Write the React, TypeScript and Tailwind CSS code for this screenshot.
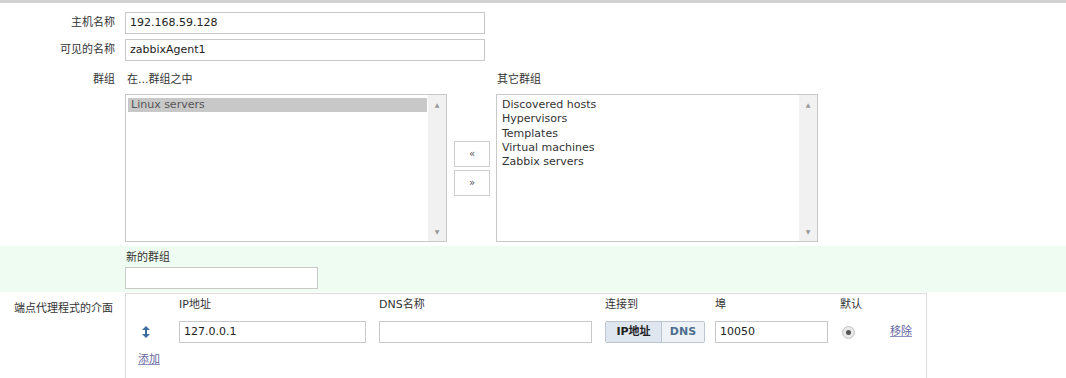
import { ReactNode } from "react";

const font = { fontFamily: '"DejaVu Sans", "Noto Sans CJK SC", sans-serif' };

const inGroup = ["Linux servers"];
const otherGroups = [
  "Discovered hosts",
  "Hypervisors",
  "Templates",
  "Virtual machines",
  "Zabbix servers",
];

const Row = ({ label, children }: { label: string; children: ReactNode }) => (
  <div className="flex items-start">
    <div className="w-[125px] shrink-0 pr-[10px] text-right text-[#333] leading-[22px]">{label}</div>
    <div>{children}</div>
  </div>
);

const TextInput = ({ value, w }: { value?: string; w: string }) => (
  <div
    className={`${w} h-[22px] border border-[#c9c9c9] bg-white px-[4px] text-[11px] leading-[20px] text-[#222]`}
  >
    {value}
  </div>
);

const ListBox = ({ items, selected }: { items: string[]; selected?: string }) => (
  <div className="flex h-[148px] w-[322px] border border-[#c9c9c9] bg-white">
    <div className="flex-1 pl-[2px] pr-[1px] pt-[3px]">
      {items.map((it) => (
        <div
          key={it}
          className={`h-[14.3px] pl-[3px] leading-[14px] ${
            it === selected ? "bg-[#c8c8c8] text-[#555]" : "text-[#333]"
          }`}
        >
          {it}
        </div>
      ))}
    </div>
    <div className="flex w-[18px] flex-col items-center justify-between bg-[#f1f1f1] py-[5px] text-[6px] text-[#999]">
      <span>▲</span>
      <span>▼</span>
    </div>
  </div>
);

const MoveButton = ({ children }: { children: ReactNode }) => (
  <div className="flex h-[26px] w-[36px] items-center justify-center border border-[#cfcfcf] bg-white text-[10px] text-[#555]">
    {children}
  </div>
);

const DragIcon = () => (
  <svg width="8" height="12" viewBox="0 0 8 12">
    <path d="M4 0 L8 4 H0 Z M4 12 L8 8 H0 Z" fill="#3f6d9a" />
    <rect x="3" y="3" width="2" height="6" fill="#3f6d9a" />
  </svg>
);

export default function App() {
  return (
    <div className="min-h-[378px] w-[1066px] overflow-hidden border-t-[3px] border-[#d2d2d2] bg-white text-[11px]" style={font}>
      <div className="flex flex-col gap-[5px] pt-[9px]">
        <Row label="主机名称">
          <TextInput value="192.168.59.128" w="w-[360px]" />
        </Row>
        <Row label="可见的名称">
          <TextInput value="zabbixAgent1" w="w-[360px]" />
        </Row>
      </div>

      <div className="mt-[12px] flex items-start">
        <div className="w-[125px] shrink-0 pr-[10px] text-right leading-[14px] text-[#333]">群组</div>
        <div className="flex items-center gap-[7px]">
          <div>
            <div className="mb-[7px] pl-[2px] leading-[14px] text-[#333]">在...群组之中</div>
            <ListBox items={inGroup} selected="Linux servers" />
          </div>
          <div className="mt-[21px] flex flex-col gap-[3px]">
            <MoveButton>«</MoveButton>
            <MoveButton>»</MoveButton>
          </div>
          <div className="-ml-[1px]">
            <div className="mb-[7px] pl-[1px] leading-[14px] text-[#333]">其它群组</div>
            <ListBox items={otherGroups} />
          </div>
        </div>
      </div>

      <div className="mt-[4px] flex h-[46px] bg-[#effcf1] pt-[5px]">
        <div className="w-[125px] shrink-0" />
        <div>
          <div className="mb-[2px] pl-[1px] leading-[14px] text-[#333]">新的群组</div>
          <TextInput w="w-[193px]" />
        </div>
      </div>

      <div className="mt-[1px] flex items-start">
        <div className="w-[125px] shrink-0 pr-[12px] pt-[9px] text-right leading-[14px] text-[#333]">
          端点代理程式的介面
        </div>
        <div className="h-[100px] w-[802px] border border-[#dcdcdc] pl-[10px] pt-[4px]">
          <div className="grid grid-cols-[43px_200px_226px_110px_125px_50px_40px] items-center text-[#333]">
            <div />
            <div className="leading-[14px]">IP地址</div>
            <div className="leading-[14px]">DNS名称</div>
            <div className="leading-[14px]">连接到</div>
            <div className="leading-[14px]">埠</div>
            <div className="leading-[14px]">默认</div>
            <div />

            <div className="mt-[9px] flex justify-start pl-[6px]">
              <DragIcon />
            </div>
            <div className="mt-[9px]">
              <TextInput value="127.0.0.1" w="w-[187px]" />
            </div>
            <div className="mt-[9px]">
              <TextInput w="w-[213px]" />
            </div>
            <div className="mt-[9px] flex h-[22px] w-[100px] overflow-hidden rounded-[2px] border border-[#bcc6d2] text-[11px] font-bold">
              <div className="flex w-[56px] items-center justify-center border-r border-[#bcc6d2] bg-[#dfe6ef] text-[#222]">
                IP地址
              </div>
              <div className="flex flex-1 items-center justify-center bg-[#eef2f7] text-[#4d6e8f]">DNS</div>
            </div>
            <div className="mt-[9px]">
              <TextInput value="10050" w="w-[113px]" />
            </div>
            <div className="mt-[9px] flex pl-[2px]">
              <div className="flex h-[13px] w-[13px] items-center justify-center rounded-full border border-[#c4c4c4] bg-[#e8e8e8]">
                <div className="h-[5px] w-[5px] rounded-full bg-[#555]" />
              </div>
            </div>
            <div className="mt-[9px] text-[#66669f] underline decoration-[#8a8fc0]">移除</div>
          </div>
          <div className="mt-[9px] pl-[2px] text-[#66669f] underline decoration-[#8a8fc0]">添加</div>
        </div>
      </div>
    </div>
  );
}
